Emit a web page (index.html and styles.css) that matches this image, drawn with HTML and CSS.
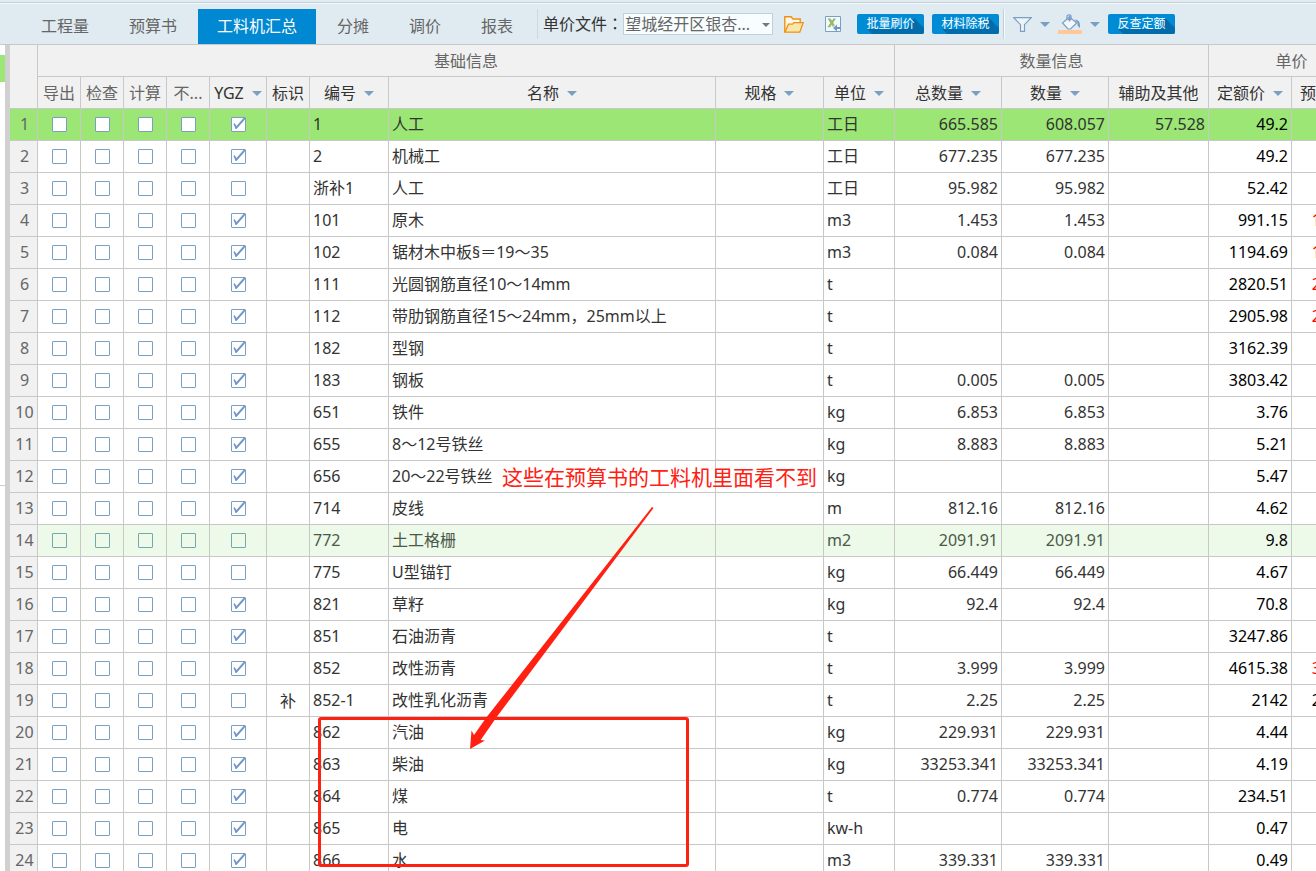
FILE: index.html
```html
<!DOCTYPE html>
<html lang="zh-CN">
<head>
<meta charset="utf-8">
<title>工料机汇总</title>
<link rel="stylesheet" href="styles.css">
</head>
<body>
<header class="toolbar">
  <nav class="tabs">
    <a class="tab" href="#">工程量</a>
    <a class="tab" href="#">预算书</a>
    <a class="tab tab-active" href="#">工料机汇总</a>
    <a class="tab" href="#">分摊</a>
    <a class="tab" href="#">调价</a>
    <a class="tab" href="#">报表</a>
  </nav>
  <div class="tools">
    <label class="file-label" for="price-file">单价文件<span class="colon" lang="zh-TW">：</span></label>
    <span class="select-box">
      <select id="price-file"><option>望城经开区银杏...</option></select>
    </span>
    <button class="icon-btn folder" type="button" aria-label="打开">
      <svg width="20" height="17" viewBox="0 0 20 17"><path d="M.8 16V.8h6.4L9 3h7.200v4" fill="#fff8e8" stroke="#ef9014" stroke-width="1.400"/><path d="M.8 16.200 4.500 8.200h4l1.500-1.600h9.200l-3.400 9.600z" fill="#fbe7ab" stroke="#ef9014" stroke-width="1.300"/></svg>
    </button>
    <button class="icon-btn excel" type="button" aria-label="导入Excel">
      <svg width="16" height="16" viewBox="0 0 16 16"><path d="M.5.500h15v15H.5z" fill="#f4f9fb" stroke="#7a9fc4"/><path d="M2.500 2.500h3l5.500 8.500H8z" fill="#96bc68"/><path d="M8.500 2.500H11L5 11.200H2.300z" fill="#96bc68"/><path d="M8.500 9.500H15V15H8.500z" fill="#f4f9fb"/><path d="M12 8.500v2.500h3.500v2H12v2.500L8 12z" fill="#6f98c4"/></svg>
    </button>
    <button class="flat-btn" type="button">批量刷价</button>
    <button class="flat-btn" type="button">材料除税</button>
    <span class="divider"></span>
    <button class="icon-btn filter" type="button" aria-label="筛选">
      <svg width="19" height="15" viewBox="0 0 19 15"><path d="M.8.700h17.400l-6.700 7v6.600h-4V7.700z" fill="#edf4f8" stroke="#7a9fc4" stroke-width="1.200"/></svg>
      <i class="caret"></i>
    </button>
    <button class="icon-btn bucket" type="button" aria-label="填充颜色">
      <svg width="24" height="20" viewBox="0 0 24 20"><path d="M0 16h24v4H0z" fill="#ffc896"/><path d="m4.500 9 7-6 7.200 6-6.200 6H10z" fill="#f3f8fb" stroke="#7a9fc4" stroke-width="1.200"/><path d="M9 5V2.500C9 .3 13 .3 13 2.500V5" fill="none" stroke="#7a9fc4" stroke-width="1.300"/><path d="M11.500 2v5.500M9.500 5.500h4" stroke="#7a9fc4" stroke-width="1.300"/><path d="M16.500 5.500c4 .2 5.500 2.500 5.500 5.500v3l-2.500-2.500V9z" fill="#7a9fc4"/></svg>
      <i class="caret"></i>
    </button>
    <button class="flat-btn" type="button">反查定额</button>
  </div>
</header>
<main class="workspace">
  <aside class="side"><div class="side-mark"></div><div class="side-line"></div></aside>
  <section class="grid-pane">
    <table class="grid">
      <colgroup>
        <col class="c-num"><col class="c-chk"><col class="c-chk"><col class="c-chk"><col class="c-chk"><col class="c-ygz"><col class="c-flag"><col class="c-code"><col class="c-name"><col class="c-spec"><col class="c-unit"><col class="c-qty"><col class="c-qty"><col class="c-aux"><col class="c-price"><col class="c-price">
      </colgroup>
      <thead>
        <tr><th rowspan="2"></th><th class="soft" colspan="10">基础信息</th><th class="soft" colspan="3">数量信息</th><th class="soft" colspan="2">单价</th></tr>
        <tr>
          <th class="soft">导出</th><th class="soft">检查</th><th class="soft">计算</th><th class="soft">不...</th>
          <th>YGZ<i class="caret"></i></th><th>标识</th><th>编号<i class="caret"></i></th><th>名称<i class="caret"></i></th><th>规格<i class="caret"></i></th><th>单位<i class="caret"></i></th><th>总数量<i class="caret"></i></th><th>数量<i class="caret"></i></th><th>辅助及其他</th><th>定额价<i class="caret"></i></th><th>预算价<i class="caret"></i></th>
        </tr>
      </thead>
      <tbody id="rows"></tbody>
    </table>
    <svg class="arrow" width="186" height="244" viewBox="0 0 186 244"><path d="M182 0 183.500 1 26.700 210 10.700 233 15 233.500 0 242 1.500 223.500 4 228 16.700 210z" fill="#ff2012"/></svg>
    <p class="note">这些在预算书的工料机里面看不到</p>
    <div class="frame"></div>
  </section>
</main>
<script src="rows.js"></script>
</body>
</html>
```
FILE: styles.css
```css
* { box-sizing: border-box; }
body {
  margin: 0;
  height: 100vh;
  display: flex;
  flex-direction: column;
  overflow: hidden;
  background: #fff;
  color: #333;
  font: 16px/24px "Noto Sans", "Noto Sans CJK SC", sans-serif;
}
button, select, input { font: inherit; margin: 0; }

.toolbar {
  flex: none;
  height: 45px;
  display: flex;
  padding-top: 9px;
  background: linear-gradient(#c3d0da, #c3d0da) 0 2px / 100% 1px no-repeat, linear-gradient(#f5f9fb, #f5f9fb) 0 3px / 100% 1px no-repeat, #e0ebf1;
  border-bottom: 1px solid #c8c8c8;
}
.tabs { display: flex; padding-left: 21px; }
.tab {
  padding: 5px 20px 0;
  color: #666;
  text-decoration: none;
  white-space: nowrap;
}
.tab-active { margin: 0 1px; padding: 5px 19px 0; background: #0089d2; color: #fff; }
.tools {
  display: flex;
  align-items: center;
  height: 30px;
  margin-left: 4px;
  padding-left: 5px;
  border-left: 1px solid #cdd9e1;
  white-space: nowrap;
}
.colon { font-family: "Noto Sans CJK TC", sans-serif; line-height: 1; }
.select-box { position: relative; }
.select-box::after {
  content: "";
  position: absolute;
  right: 3px;
  top: 10px;
  border: 4px solid transparent;
  border-top-color: #777;
  border-bottom: 0;
}
.select-box select {
  display: block;
  width: 150px;
  height: 22px;
  padding: 0 1px;
  appearance: none;
  border: 1px solid #bfd0dc;
  border-radius: 0;
  background: #f8fdff;
  color: #666;
  line-height: 20px;
}
.icon-btn {
  display: flex;
  align-items: center;
  padding: 0;
  border: 0;
  background: none;
}
.icon-btn svg { display: block; }
.folder { margin-left: 11px; }
.excel { margin: 0 16px 0 21px; }
.flat-btn {
  position: relative;
  z-index: 0;
  width: 67px;
  height: 20px;
  margin-right: 8px;
  padding: 0;
  border: 0;
  border-radius: 2px;
  overflow: hidden;
  background: #008bd5;
  color: #fff;
  font-size: 12px;
  line-height: 20px;
}
.flat-btn::before {
  content: "";
  position: absolute;
  inset: 0;
  z-index: -1;
  background: #006ca9;
  clip-path: polygon(10px 15px, 15px 20px, 100% 20px, 100% 14px, 57px 4px, 50px 15px);
}
.divider { width: 2px; height: 30px; margin: 0 8px 0 -4px; border-left: 1px solid #c5ced6; border-right: 1px solid #f6fafc; }
.caret {
  display: inline-block;
  border: 5px solid transparent;
  border-top-color: #7a9fc4;
  border-bottom: 0;
}
.icon-btn .caret { margin-left: 8px; }
.filter { margin-right: 8px; }
.bucket { margin-right: 8px; }

.workspace { flex: 1; min-height: 0; display: flex; }
.side { flex: none; width: 10px; border-right: 5px solid #d0d0d0; padding-top: 10px; }
.side-mark { height: 27px; background: #9be675; }
.side-line { height: 404px; border-bottom: 1px solid #ccc; }
.grid-pane { flex: 1; min-width: 0; position: relative; overflow: hidden; }

.grid {
  width: calc(100% + 59px);
  table-layout: fixed;
  border-collapse: separate;
  border-spacing: 0;
}
.c-num { width: 28px; }
.c-chk { width: 43px; }
.c-ygz { width: 57px; }
.c-flag { width: 43px; }
.c-code { width: 79px; }
.c-name { width: auto; }
.c-spec { width: 108px; }
.c-unit { width: 71px; }
.c-qty { width: 107px; }
.c-aux { width: 100px; }
.c-price { width: 83px; }
.grid th, .grid td {
  height: 32px;
  padding: 0 3px 2px;
  border: 0 solid #c8c8c8;
  border-width: 0 1px 1px 0;
  font-weight: 400;
  line-height: 24px;
  white-space: nowrap;
  overflow: hidden;
}
.grid th { background: #f1f1f1; padding: 0; text-align: center; }
.grid .soft, .grid .num { color: #666; }
.grid th .caret { margin: 0 0 3px 8px; }
.grid td { text-align: left; }
.grid .num { background: #f1f1f1; text-align: center; padding: 0 0 2px 2px; }
.grid .mid { text-align: center; padding: 0; }
.grid .right { text-align: right; }
.grid .price { color: #000; }
.grid .changed { color: #f00; }
.selected td, .grid .selected .num { background: #9be675; }
.hover td { background: #edf9e9; }
.hover td:not(.num):not(.price) { color: #4a5a48; }
.check {
  display: block;
  width: 15px;
  height: 15px;
  margin: 0 auto;
  appearance: none;
  border: 1px solid #7a9fc4;
  border-radius: 1px;
  background: #fff;
}
.hover .check { background: transparent; border-color: #76a7ad; }
.check:checked::before {
  content: "";
  display: block;
  width: 14px;
  height: 13px;
  background: #7399c2;
  clip-path: polygon(2px 6px, 3px 5px, 5px 8px, 12px 0, 14px 0, 13px 2px, 5px 11px, 4px 11px);
}

.arrow { position: absolute; left: 460px; top: 462px; }
.note { position: absolute; left: 492px; top: 416px; margin: 0; color: #ff2012; font-size: 21px; line-height: 32px; white-space: nowrap; }
.frame { position: absolute; left: 308px; top: 672px; width: 371px; height: 150px; border: 3px solid #ff2012; border-radius: 3px; }
```
FILE: rows.js
```js
// [ygz, flag, code, name, unit, total, quantity, auxiliary, quota price, budget price]
const rows = [
  [1, "", "1", "人工", "工日", "665.585", "608.057", "57.528", "49.2", ""],
  [1, "", "2", "机械工", "工日", "677.235", "677.235", "", "49.2", ""],
  [0, "", "浙补1", "人工", "工日", "95.982", "95.982", "", "52.42", ""],
  [1, "", "101", "原木", "m3", "1.453", "1.453", "", "991.15", "1150.44"],
  [1, "", "102", "锯材木中板§＝19～35", "m3", "0.084", "0.084", "", "1194.69", "1327.43"],
  [1, "", "111", "光圆钢筋直径10～14mm", "t", "", "", "", "2820.51", "2991.45"],
  [1, "", "112", "带肋钢筋直径15～24mm，25mm以上", "t", "", "", "", "2905.98", "2991.45"],
  [1, "", "182", "型钢", "t", "", "", "", "3162.39", ""],
  [1, "", "183", "钢板", "t", "0.005", "0.005", "", "3803.42", ""],
  [1, "", "651", "铁件", "kg", "6.853", "6.853", "", "3.76", ""],
  [1, "", "655", "8～12号铁丝", "kg", "8.883", "8.883", "", "5.21", ""],
  [1, "", "656", "20～22号铁丝", "kg", "", "", "", "5.47", ""],
  [1, "", "714", "皮线", "m", "812.16", "812.16", "", "4.62", ""],
  [0, "", "772", "土工格栅", "m2", "2091.91", "2091.91", "", "9.8", ""],
  [0, "", "775", "U型锚钉", "kg", "66.449", "66.449", "", "4.67", ""],
  [1, "", "821", "草籽", "kg", "92.4", "92.4", "", "70.8", ""],
  [1, "", "851", "石油沥青", "t", "", "", "", "3247.86", ""],
  [1, "", "852", "改性沥青", "t", "3.999", "3.999", "", "4615.38", "3931.62"],
  [0, "补", "852-1", "改性乳化沥青", "t", "2.25", "2.25", "", "2142", "2142.00"],
  [1, "", "862", "汽油", "kg", "229.931", "229.931", "", "4.44", ""],
  [1, "", "863", "柴油", "kg", "33253.341", "33253.341", "", "4.19", ""],
  [1, "", "864", "煤", "t", "0.774", "0.774", "", "234.51", ""],
  [1, "", "865", "电", "kw-h", "", "", "", "0.47", ""],
  [1, "", "866", "水", "m3", "339.331", "339.331", "", "0.49", ""]
];

const box = (label, on) =>
  `<td class="mid"><input class="check" type="checkbox" aria-label="${label}"${on ? " checked" : ""}></td>`;

document.getElementById("rows").innerHTML = rows.map((r, i) => {
  const state = i === 0 ? "selected" : i === 13 ? "hover" : "";
  const changed = r[9] && i !== 18 ? " changed" : "";
  return `<tr class="${state}"><td class="num">${i + 1}</td>` +
    ["导出", "检查", "计算", "不计"].map(l => box(l, false)).join("") + box("YGZ", r[0]) +
    `<td class="mid">${r[1]}</td><td>${r[2]}</td><td>${r[3]}</td><td></td><td>${r[4]}</td>` +
    `<td class="right">${r[5]}</td><td class="right">${r[6]}</td><td class="right">${r[7]}</td>` +
    `<td class="right price">${r[8]}</td><td class="right price${changed}">${r[9]}</td></tr>`;
}).join("");
```
